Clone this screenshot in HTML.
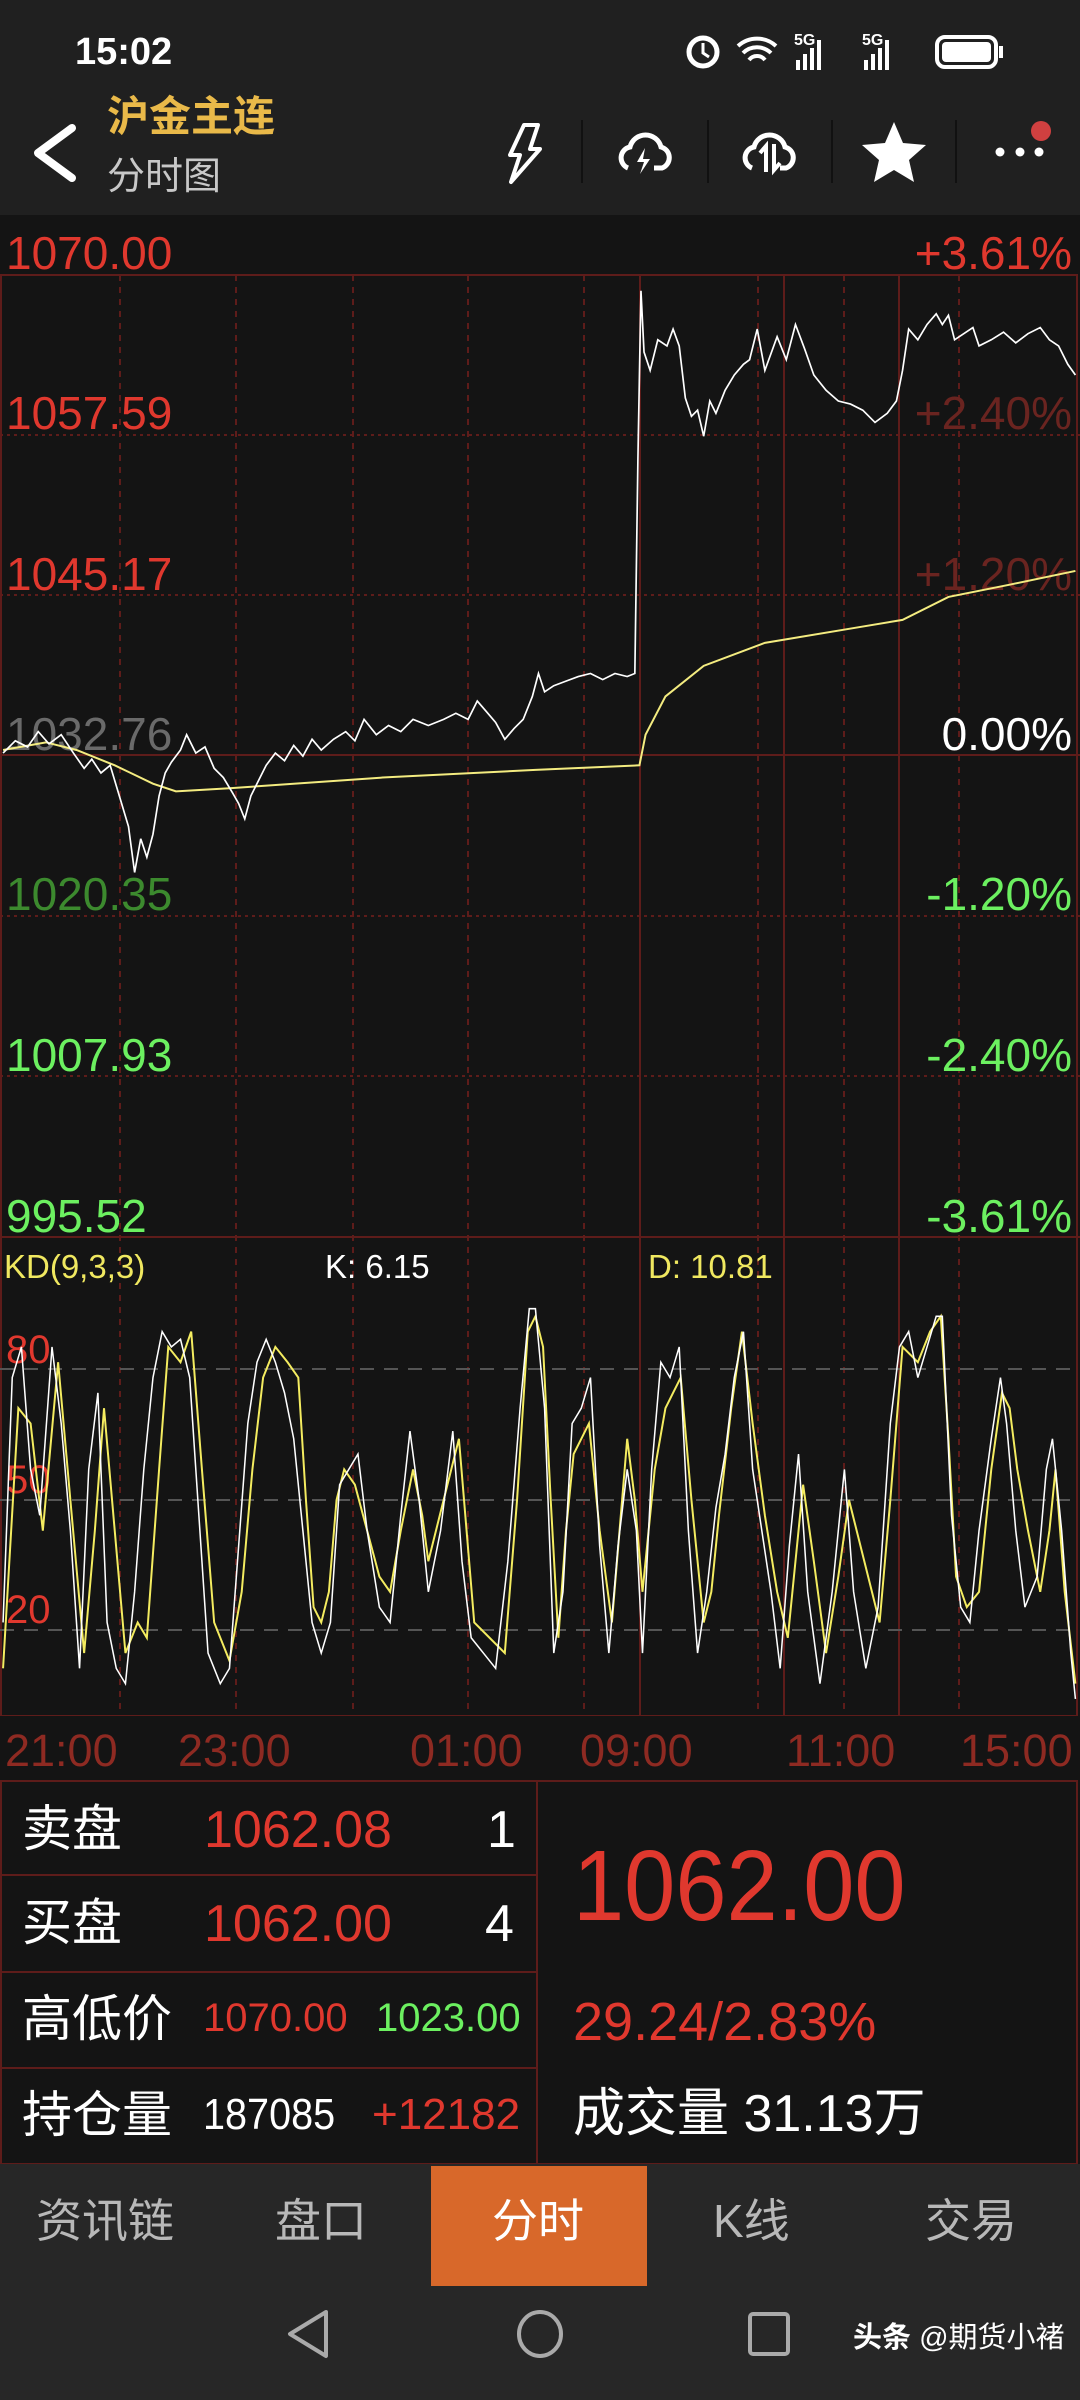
<!DOCTYPE html>
<html><head><meta charset="utf-8"><style>
*{margin:0;padding:0;box-sizing:border-box}
body{width:1080px;height:2400px;background:#141414;position:relative;overflow:hidden;font-family:"Liberation Sans","Noto Sans CJK SC",sans-serif}
.a{position:absolute;white-space:nowrap;line-height:1}
.lab{font-size:46px}
.rlab{font-size:46px;text-align:right;right:8px}
.t{font-size:45px;color:#8e2a22;top:1728px}
</style></head><body>
<div class="a" style="left:0;top:0;width:1080px;height:215px;background:#202020"></div>
<div class="a" style="left:75px;top:33px;font-size:38px;color:#fff;font-weight:bold">15:02</div>
<svg class="a" style="left:680px;top:28px" width="330" height="46" viewBox="0 0 330 46">
<circle cx="23" cy="24" r="14" fill="none" stroke="#fff" stroke-width="5"/><path d="M23 15v10l6 4" stroke="#fff" stroke-width="3" fill="none"/>
<path d="M58 18a28 28 0 0 1 38 0M63 25a20 20 0 0 1 28 0M69 32a10 10 0 0 1 16 0" stroke="#fff" stroke-width="4" fill="none"/>
<text x="114" y="17" font-size="16" fill="#fff" font-weight="bold" font-family="Liberation Sans">5G</text>
<rect x="116" y="32" width="4" height="10" fill="#fff"/><rect x="123" y="26" width="4" height="16" fill="#fff"/><rect x="130" y="20" width="4" height="22" fill="#fff"/><rect x="137" y="12" width="4" height="30" fill="#fff"/>
<text x="182" y="17" font-size="16" fill="#fff" font-weight="bold" font-family="Liberation Sans">5G</text>
<rect x="184" y="32" width="4" height="10" fill="#fff"/><rect x="191" y="26" width="4" height="16" fill="#fff"/><rect x="198" y="20" width="4" height="22" fill="#fff"/><rect x="205" y="12" width="4" height="30" fill="#fff"/>
<rect x="257" y="9" width="59" height="30" rx="8" fill="none" stroke="#fff" stroke-width="4"/><rect x="262" y="14" width="49" height="20" rx="4" fill="#fff"/><rect x="319" y="18" width="4" height="12" fill="#fff"/>
</svg>
<svg class="a" style="left:28px;top:122px" width="50" height="62"><path d="M44 6L10 31L44 56" stroke="#fff" stroke-width="8" fill="none" stroke-linecap="round" stroke-linejoin="round"/></svg>
<div class="a" style="left:107px;top:96px;font-size:42px;color:#e9b949;font-weight:bold">沪金主连</div>
<div class="a" style="left:107px;top:158px;font-size:38px;color:#c8c8c8">分时图</div>
<svg class="a" style="left:490px;top:115px" width="580" height="75" viewBox="490 115 580 75">
<path d="M524 125h14l-8 24h10l-29 33 9-27h-10z" stroke="#fff" stroke-width="4" fill="none" stroke-linejoin="round"/>
<rect x="581" y="120" width="2" height="63" fill="#111"/><rect x="707" y="120" width="2" height="63" fill="#111"/><rect x="831" y="120" width="2" height="63" fill="#111"/><rect x="955" y="120" width="2" height="63" fill="#111"/>
<path d="M628 168a11 11 0 0 1 2-21a16 16 0 0 1 31 0a11 11 0 0 1 1 21h-8" stroke="#fff" stroke-width="5" fill="none"/>
<path d="M645 148l-8 14h7l-4 12 10-15h-7z" fill="#fff"/>
<path d="M752 168a11 11 0 0 1 2-21a16 16 0 0 1 31 0a11 11 0 0 1 1 21h-6" stroke="#fff" stroke-width="5" fill="none"/>
<path d="M766 172v-26l-6 7M774 144v26l6-7" stroke="#fff" stroke-width="4" fill="none"/>
<path d="M894 122l9 21 23 2-17 15 5 22-20-12-20 12 5-22-17-15 23-2z" fill="#fff"/>
<circle cx="1000" cy="152" r="4.5" fill="#fff"/><circle cx="1020" cy="152" r="4.5" fill="#fff"/><circle cx="1039" cy="152" r="4.5" fill="#fff"/>
<circle cx="1041" cy="131" r="10" fill="#d04040"/>
</svg>

<svg class="a" style="left:0;top:0" width="1080" height="2400">
<g stroke="#5e1c1a" stroke-width="2" stroke-dasharray="6 6">
<line x1="120" y1="275" x2="120" y2="1716"/><line x1="236" y1="275" x2="236" y2="1716"/><line x1="353" y1="275" x2="353" y2="1716"/><line x1="468" y1="275" x2="468" y2="1716"/><line x1="584" y1="275" x2="584" y2="1716"/><line x1="758" y1="275" x2="758" y2="1716"/><line x1="844" y1="275" x2="844" y2="1716"/><line x1="959" y1="275" x2="959" y2="1716"/>
<line x1="0" y1="435" x2="1080" y2="435" stroke-dasharray="3 4"/><line x1="0" y1="595" x2="1080" y2="595" stroke-dasharray="3 4"/><line x1="0" y1="916" x2="1080" y2="916" stroke-dasharray="3 4"/><line x1="0" y1="1076" x2="1080" y2="1076" stroke-dasharray="3 4"/>
</g>
<g stroke="#5e1c1a" stroke-width="2"><line x1="640" y1="275" x2="640" y2="1716"/><line x1="784" y1="275" x2="784" y2="1716"/><line x1="899" y1="275" x2="899" y2="1716"/>
<rect x="1" y="275" width="1076" height="1441" fill="none"/><line x1="0" y1="755" x2="1080" y2="755"/><line x1="0" y1="1237" x2="1080" y2="1237"/></g>
<g stroke="#555" stroke-width="2" stroke-dasharray="14 10"><line x1="0" y1="1369" x2="1080" y2="1369"/><line x1="0" y1="1500" x2="1080" y2="1500"/><line x1="0" y1="1630" x2="1080" y2="1630"/></g>
</svg>
<div class="a lab" style="left:6px;top:230px;color:#e0382e">1070.00</div>
<div class="a lab" style="left:6px;top:390px;color:#e0382e">1057.59</div>
<div class="a lab" style="left:6px;top:551px;color:#e0382e">1045.17</div>
<div class="a lab" style="left:6px;top:711px;color:#6a6a6a">1032.76</div>
<div class="a lab" style="left:6px;top:871px;color:#3c8a2e">1020.35</div>
<div class="a lab" style="left:6px;top:1032px;color:#6cf060">1007.93</div>
<div class="a lab" style="left:6px;top:1193px;color:#6cf060">995.52</div>
<div class="a rlab" style="top:230px;color:#e0382e">+3.61%</div>
<div class="a rlab" style="top:390px;color:#6a2420">+2.40%</div>
<div class="a rlab" style="top:551px;color:#6a2420">+1.20%</div>
<div class="a rlab" style="top:711px;color:#fff">0.00%</div>
<div class="a rlab" style="top:871px;color:#6cf060">-1.20%</div>
<div class="a rlab" style="top:1032px;color:#6cf060">-2.40%</div>
<div class="a rlab" style="top:1193px;color:#6cf060">-3.61%</div>
<div class="a" style="left:4px;top:1250px;font-size:33px;color:#f0e860">KD(9,3,3)</div>
<div class="a" style="left:325px;top:1250px;font-size:33px;color:#fff">K: 6.15</div>
<div class="a" style="left:648px;top:1250px;font-size:33px;color:#f0e860">D: 10.81</div>
<div class="a" style="left:6px;top:1330px;font-size:40px;color:#e0382e">80</div>
<div class="a" style="left:6px;top:1460px;font-size:40px;color:#e0382e">50</div>
<div class="a" style="left:6px;top:1590px;font-size:40px;color:#e0382e">20</div>

<svg class="a" style="left:0;top:0" width="1080" height="2400" viewBox="0 0 706 1568" preserveAspectRatio="none">
<polyline fill="none" stroke="#f4ec80" stroke-width="1.3" points="2,490 30,485 50,490 75,500 100,512 115,517 150,515 250,508 350,503 418,500 422,480 435,455 460,435 500,420 560,410 590,405 620,390 660,382 703,373"/>
<polyline fill="none" stroke="#fff" stroke-width="1.1" points="2,492 10,484 18,488 25,478 32,486 40,480 48,492 55,502 60,496 66,505 72,500 78,520 84,540 88,570 92,548 96,560 100,545 104,520 108,505 112,498 118,490 122,480 128,492 134,488 140,502 146,508 152,518 156,525 160,535 164,520 168,512 174,500 180,492 186,497 192,487 198,494 204,483 210,490 218,483 226,478 232,484 238,470 246,480 254,474 262,478 270,470 280,474 290,470 298,466 306,470 312,458 318,465 324,472 330,483 336,476 342,470 348,455 352,440 356,452 362,448 370,445 378,442 386,440 394,444 402,440 410,442 415,440 417,300 419,190 421,230 425,242 430,222 436,226 440,215 444,226 448,260 452,272 456,268 460,285 464,262 468,270 474,255 480,245 486,238 490,235 495,215 500,242 508,220 514,235 520,212 526,228 532,245 540,255 548,262 556,264 564,268 572,276 580,270 586,262 590,242 594,215 600,222 606,212 612,205 616,212 620,206 624,222 630,218 636,214 640,226 648,222 656,217 664,224 672,218 680,214 686,222 692,226 698,238 703,245"/>
<polyline fill="none" stroke="#f4ec60" stroke-width="1.3" points="2,1090 12,920 20,930 28,1000 38,890 46,980 55,1080 62,1000 68,920 75,1000 82,1080 90,1060 96,1070 104,960 110,880 118,890 125,870 132,960 140,1060 150,1085 158,1040 165,960 172,900 180,880 188,890 195,900 200,980 205,1050 210,1060 215,1040 220,980 225,960 232,970 240,1000 248,1030 255,1040 262,1000 270,960 276,990 280,1020 290,980 300,940 305,1000 310,1060 320,1070 330,1080 338,980 345,870 350,860 355,880 360,980 365,1070 370,1000 375,950 380,940 385,930 392,1000 400,1060 405,1000 410,940 415,980 420,1040 428,960 435,920 440,910 445,900 452,980 460,1060 465,1040 470,990 478,920 485,870 492,930 500,990 508,1040 515,1070 520,1020 525,970 532,1020 540,1080 548,1030 555,980 565,1020 575,1060 582,980 590,880 595,885 600,890 608,870 615,860 620,940 625,1030 632,1050 640,1040 648,960 655,910 660,920 665,960 672,1000 680,1040 686,1000 690,960 696,1040 703,1100"/>
<polyline fill="none" stroke="#fff" stroke-width="1" points="2,1060 8,900 14,880 20,960 26,990 34,880 40,930 46,1000 52,1090 58,960 64,910 70,1060 76,1090 82,1100 88,1040 94,960 100,900 106,870 112,880 118,875 124,900 130,990 136,1080 144,1100 150,1090 156,1010 162,930 168,890 174,875 180,890 186,910 192,940 198,1000 204,1060 210,1080 216,1060 222,970 228,960 234,950 240,1000 248,1050 255,1060 262,990 268,935 274,980 280,1040 288,1000 296,935 302,1020 308,1070 316,1080 324,1090 332,1020 340,920 346,855 350,855 356,920 362,1080 368,1040 374,930 380,920 386,900 392,1010 398,1080 404,1010 410,960 416,1000 420,1080 426,960 432,890 438,900 444,880 450,1000 456,1080 462,1040 468,985 474,950 480,900 486,870 492,960 498,1000 504,1040 510,1090 516,1010 522,950 528,1040 536,1100 544,1040 552,960 558,1040 566,1090 574,1050 582,930 588,880 594,870 600,900 606,880 612,860 616,860 622,990 628,1050 634,1060 640,1000 648,940 654,900 658,930 664,1000 670,1050 678,1030 684,960 688,940 694,1000 700,1080 703,1110"/>
</svg>

<div class="a" style="left:0;top:1716px;width:1080px;height:65px;background:#141414"></div>
<div class="a t" style="left:5px">21:00</div>
<div class="a t" style="left:178px">23:00</div>
<div class="a t" style="left:410px">01:00</div>
<div class="a t" style="left:580px">09:00</div>
<div class="a t" style="left:786px">11:00</div>
<div class="a t" style="left:960px">15:00</div>

<svg class="a" style="left:0;top:0" width="1080" height="2400">
<g stroke="#5e1c1a" stroke-width="2" fill="none"><rect x="1" y="1781" width="1076" height="383"/><line x1="537" y1="1781" x2="537" y2="2164"/><line x1="0" y1="1875" x2="537" y2="1875"/><line x1="0" y1="1972" x2="537" y2="1972"/><line x1="0" y1="2068" x2="537" y2="2068"/></g>
</svg>
<div class="a" style="left:22px;top:1804px;font-size:50px;color:#fff">卖盘</div>
<div class="a" style="left:204px;top:1804px;font-size:52px;color:#e0382e">1062.08</div>
<div class="a" style="left:487px;top:1804px;font-size:52px;color:#fff">1</div>
<div class="a" style="left:22px;top:1898px;font-size:50px;color:#fff">买盘</div>
<div class="a" style="left:204px;top:1898px;font-size:52px;color:#e0382e">1062.00</div>
<div class="a" style="left:485px;top:1898px;font-size:52px;color:#fff">4</div>
<div class="a" style="left:22px;top:1994px;font-size:50px;color:#fff">高低价</div>
<div class="a" style="left:203px;top:1998px;font-size:40px;color:#e0382e">1070.00</div>
<div class="a" style="left:376px;top:1998px;font-size:40px;color:#6cf060">1023.00</div>
<div class="a" style="left:22px;top:2090px;font-size:50px;color:#fff">持仓量</div>
<div class="a" style="left:203px;top:2093px;font-size:44px;color:#fff;transform:scaleX(0.9);transform-origin:left">187085</div>
<div class="a" style="left:372px;top:2093px;font-size:44px;color:#e0382e">+12182</div>
<div class="a" style="left:573px;top:1836px;font-size:100px;color:#e0382e;transform:scaleX(0.92);transform-origin:left">1062.00</div>
<div class="a" style="left:573px;top:1995px;font-size:54px;color:#e0382e">29.24/2.83%</div>
<div class="a" style="left:573px;top:2088px;font-size:52px;color:#fff">成交量 31.13万</div>

<div class="a" style="left:0;top:2164px;width:1080px;height:236px;background:#272727"></div>
<div class="a" style="left:431px;top:2166px;width:216px;height:120px;background:#d8682a"></div>
<div class="a" style="left:36px;top:2198px;font-size:46px;color:#b8b8b8">资讯链</div>
<div class="a" style="left:275px;top:2198px;font-size:46px;color:#b8b8b8">盘口</div>
<div class="a" style="left:492px;top:2198px;font-size:46px;color:#fff">分时</div>
<div class="a" style="left:713px;top:2198px;font-size:46px;color:#b8b8b8">K线</div>
<div class="a" style="left:925px;top:2198px;font-size:46px;color:#b8b8b8">交易</div>
<svg class="a" style="left:0;top:2286px" width="1080" height="114">
<path d="M326 26L290 48L326 70Z" fill="none" stroke="#aaa" stroke-width="4" stroke-linejoin="round"/>
<ellipse cx="540" cy="48" rx="21" ry="22" fill="none" stroke="#aaa" stroke-width="4"/>
<rect x="750" y="28" width="38" height="40" rx="3" fill="none" stroke="#aaa" stroke-width="4"/>
</svg>
<div class="a" style="left:853px;top:2324px;font-size:29px;color:#fff;font-weight:bold">头条 <span style="font-weight:normal">@期货小褚</span></div>
</body></html>
